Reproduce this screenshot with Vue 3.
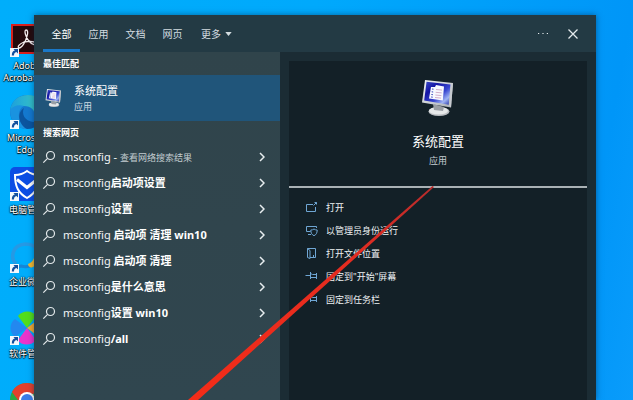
<script setup>
import { ref } from 'vue'

const tabs = ['全部', '应用', '文档', '网页']
const activeTab = ref('全部')

const results = [
  { query: 'msconfig', hint: '查看网络搜索结果' },
  { query: 'msconfig', rest: '启动项设置' },
  { query: 'msconfig', rest: '设置' },
  { query: 'msconfig', rest: ' 启动项 清理 win10' },
  { query: 'msconfig', rest: ' 启动项 清理' },
  { query: 'msconfig', rest: '是什么意思' },
  { query: 'msconfig', rest: '设置 win10' },
  { query: 'msconfig', rest: '/all' },
]

const actions = [
  { icon: 'open', label: '打开' },
  { icon: 'admin', label: '以管理员身份运行' },
  { icon: 'folder', label: '打开文件位置' },
  { icon: 'pin', label: '固定到"开始"屏幕' },
  { icon: 'pin', label: '固定到任务栏' },
]

const shortcuts = [
  { id: 'acrobat', lines: ['Adobe', 'Acrobat DC'] },
  { id: 'edge', lines: ['Microsoft', 'Edge'] },
  { id: 'guard', lines: ['电脑管家'] },
  { id: 'wecom', lines: ['企业微信'] },
  { id: 'soft', lines: ['软件管理'] },
  { id: 'chrome', lines: [] },
]
</script>

<template>
  <div class="desktop">
    <svg class="defs" aria-hidden="true">
      <defs>
        <linearGradient id="screen" x1="0" y1="0" x2="1" y2="1">
          <stop offset="0" stop-color="#3c4cc8" />
          <stop offset=".3" stop-color="#1414a4" />
          <stop offset=".6" stop-color="#3a48d0" />
          <stop offset=".8" stop-color="#a0b4f4" />
          <stop offset="1" stop-color="#1c2a9c" />
        </linearGradient>
        <linearGradient id="frame" x1="0" y1="0" x2="1" y2="1">
          <stop offset="0" stop-color="#f2f4f6" />
          <stop offset="1" stop-color="#a9aeb4" />
        </linearGradient>
        <linearGradient id="edge-top" x1="0" y1="0" x2="1" y2="0">
          <stop offset="0" stop-color="#1c9fdc" />
          <stop offset="1" stop-color="#3fcfc0" />
        </linearGradient>
        <symbol id="monitor" viewBox="0 0 34 38">
          <ellipse cx="18" cy="32.500" rx="10.500" ry="4.500" fill="#b9bcc0" />
          <ellipse cx="17.500" cy="31.800" rx="9.500" ry="3.800" fill="#e6e8e9" />
          <path d="M12 25l11 3-1 4-9-1z" fill="#9a9ea4" />
          <path d="M4 1l28 3-2 24.500L1 23.500z" fill="url(#frame)" />
          <path d="M5.500 2.800l24 2.600-1.800 20.400L3.200 21.500z" fill="url(#screen)" />
          <path d="M10 8h4l1-2 8 1.500-1.200 14L8 19.500z" fill="#f8f9ff" />
          <path d="M15 10.500l6 .6M14.700 13.300l6 .6M14.400 16l6 .6M14 18.500l6 .6" stroke="#c99abc" stroke-width=".8" />
          <path d="M11 10l1.500.2M10.700 12.800l1.500.2M10.400 15.500l1.500.2M10.200 18l1.500.2" stroke="#3446b8" />
          <path d="M30 5l2-1-2 24.500-2-2z" fill="#c6cacf" />
        </symbol>
      </defs>
    </svg>

    <div class="shortcuts">
      <a v-for="s in shortcuts" :key="s.id" class="shortcut" href="#">
        <svg class="shortcut-icon" viewBox="0 0 34 34" aria-hidden="true">
          <g v-if="s.id === 'acrobat'">
            <rect x="2" y="2" width="30" height="28" fill="#250a0c" stroke="#d8201c" stroke-width="2" />
            <path d="M16 7c2 0 2 3 1 6-1 5-5 12-8 12-2-1 0-4 5-6 5-1 10-1 12 1 1 3-4 2-7-2-2-2-4-7-4-9 0-1 .3-2 1-2z" fill="none" stroke="#f6eeee" stroke-width="1.300" />
          </g>
          <g v-else-if="s.id === 'edge'">
            <circle cx="17" cy="17" r="17" fill="#1479cf" />
            <path d="M0 15C2 5 9 0 18 0c9 0 16 6 16 14 0 5-4 8-10 8 2-7-3-11-10-11-6 0-11 2-14 4z" fill="url(#edge-top)" />
            <path d="M0 15c3-4 9-6 14-4-6 3-7 12-2 18 2 2 4 4 7 5C8 35 0 27 0 15z" fill="#1a93e0" />
            <path d="M14 13c-3 6 1 13 9 14 3 0 6-1 8-2-3 6-8 9-14 9-8-4-11-16-3-21z" fill="#0b559f" />
          </g>
          <g v-else-if="s.id === 'guard'">
            <rect width="34" height="34" rx="5" fill="#0c4ee4" />
            <path d="M17 4c4 3 8 4 12 4 0 11-3 18-12 23C8 26 5 19 5 8c4 0 8-1 12-4z" fill="none" stroke="#fff" stroke-width="2" />
            <path d="M7 12.500l10 8 10-8" fill="none" stroke="#fff" stroke-width="3" />
          </g>
          <g v-else-if="s.id === 'wecom'">
            <path d="M6 25C0 19 2 6 15 5c13 0 17 10 12 16" fill="none" stroke="#2699e4" stroke-width="3.500" />
            <path d="M6 25l-1 4 6-2c3 1 6 1 9 0" fill="none" stroke="#1785d6" stroke-width="3" />
            <path d="M18 25c3-1 5-3 6-6 2 3 3 7-1 9-2 1-5 0-5-3z" fill="#f5b92d" />
          </g>
          <g v-else-if="s.id === 'soft'">
            <path d="M17 17L8 5c4-6 15-6 18 0z" fill="#53dd1c" />
            <path d="M17 17L29 8c6 4 6 14 0 18z" fill="#f6a92c" />
            <path d="M17 17l9 12c-4 6-15 6-18 0z" fill="#ea35cc" />
            <path d="M17 17L5 26C-1 22-1 12 5 8z" fill="#2388ef" />
          </g>
          <g v-else>
            <circle cx="17" cy="17" r="17" fill="#28a745" />
            <path d="M2 9C8-3 26-3 32 9l-15 3-6 9z" fill="#e4402d" />
            <path d="M32 9c5 13-4 25-15 25l8-17z" fill="#fbc516" />
            <circle cx="17" cy="17" r="8" fill="#fff" />
            <circle cx="17" cy="17" r="6" fill="#3b7de8" />
          </g>
          <g v-if="s.id !== 'chrome'">
            <rect x="0" y="25" width="9" height="9" fill="#f4f8fc" />
            <path d="M1.800 32.500c0-3 1-4.500 3-5L3.500 26H8v4.500L6.500 29c-2 .5-2.500 1.500-2.500 3.500z" fill="#14509e" />
          </g>
        </svg>
        <span v-for="line in s.lines" :key="line" class="shortcut-label">{{ line }}</span>
      </a>
    </div>

    <main class="search">
      <header class="bar">
        <nav class="tabs">
          <button
            v-for="t in tabs"
            :key="t"
            class="tab"
            :class="{ active: t === activeTab }"
            @click="activeTab = t"
          >{{ t }}</button>
          <button class="tab more">
            更多
            <svg class="caret" viewBox="0 0 8 5" aria-hidden="true"><path d="M0 0h8L4 5z" fill="currentColor" /></svg>
          </button>
        </nav>
        <button class="tool" aria-label="选项">
          <svg class="tool-icon" viewBox="0 0 12 12" aria-hidden="true">
            <path d="M1 5.500h1.200M5.400 5.500h1.200M9.800 5.500H11" stroke="currentColor" stroke-width="1.200" />
          </svg>
        </button>
        <button class="tool" aria-label="关闭">
          <svg class="tool-icon" viewBox="0 0 12 12" aria-hidden="true">
            <path d="M1.500 1.500l9 9M10.500 1.500l-9 9" stroke="currentColor" stroke-width="1.300" />
          </svg>
        </button>
      </header>

      <div class="body">
        <section class="results">
          <h2 class="group">最佳匹配</h2>
          <button class="best">
            <svg class="best-icon" viewBox="0 0 34 38" aria-hidden="true"><use href="#monitor" /></svg>
            <span class="best-text">
              <span class="best-name">系统配置</span>
              <span class="best-kind">应用</span>
            </span>
          </button>
          <h2 class="group">搜索网页</h2>
          <ul class="list">
            <li v-for="(r, i) in results" :key="i">
              <button class="row">
                <svg class="lens" viewBox="0 0 14 14" aria-hidden="true">
                  <circle cx="8.500" cy="5.500" r="4" />
                  <path d="M5.600 8.400L1.300 12.700" />
                </svg>
                <span class="query">{{ r.query }}<b v-if="r.rest">{{ r.rest }}</b><template v-if="r.hint"> - <span class="hint">{{ r.hint }}</span></template></span>
                <svg class="chevron" viewBox="0 0 6 10" aria-hidden="true"><path d="M1 1l4 4-4 4" /></svg>
              </button>
            </li>
          </ul>
        </section>

        <section class="detail">
          <div class="card">
            <div class="hero">
              <svg class="hero-icon" viewBox="0 0 34 38" aria-hidden="true"><use href="#monitor" /></svg>
              <h1 class="hero-name">系统配置</h1>
              <p class="hero-kind">应用</p>
            </div>
            <ul class="actions">
              <li v-for="a in actions" :key="a.label">
                <button class="action">
                  <svg class="action-icon" viewBox="0 0 13 13" aria-hidden="true">
                    <path v-if="a.icon === 'open'" d="M8 3.500H1.500v7h9V6M8.500 4.500l3-3M9.500 1.500h2v2" />
                    <path v-else-if="a.icon === 'admin'" d="M5.500 7.500h-4v-5h10v1.500M3 10.500h3M9 5c1 .8 2 1 3.200 1 0 3-1 4.700-3.200 5.700C6.800 10.700 5.800 9 5.800 6c1.200 0 2.200-.2 3.200-1z" />
                    <path v-else-if="a.icon === 'folder'" d="M2.500 1.500v9l2.500 1V3.500L2.500 1.500h8v9H5M8.500 8v2.500" />
                    <path v-else d="M.5 5.500H5M5.500 2v7M5.500 3.500l2 1h4M5.500 7.500h6M11.500 3v6" />
                  </svg>
                  <span>{{ a.label }}</span>
                </button>
              </li>
            </ul>
          </div>
        </section>
      </div>
    </main>

    <svg class="pointer" viewBox="0 0 248 214" aria-hidden="true">
      <defs>
        <linearGradient id="ink" x1="1" y1="0" x2="0" y2="1">
          <stop offset="0" stop-color="#b92c2c" />
          <stop offset=".35" stop-color="#e52c20" />
          <stop offset="1" stop-color="#f42c18" />
        </linearGradient>
      </defs>
      <path d="M246.500 0l1.500 1L12 214H2z" fill="url(#ink)" />
    </svg>
  </div>
</template>

<style>
html,
body {
  margin: 0;
}
</style>

<style scoped>
.desktop {
  position: relative;
  min-height: 100vh;
  overflow: hidden;
  box-sizing: border-box;
  background: linear-gradient(100deg, #00aefb 0%, #00a9fc 45%, #0096f8 90%, #0a9cfb 100%);
  font-family: "Noto Sans", "Noto Sans CJK SC", sans-serif;
  color: #e9eef0;
}

.defs {
  position: absolute;
  width: 0;
  height: 0;
}

button {
  margin: 0;
  padding: 0;
  border: 0;
  background: none;
  color: inherit;
  font: inherit;
  text-align: left;
}

ul {
  margin: 0;
  padding: 0;
  list-style: none;
}

.shortcuts {
  position: absolute;
  top: 23px;
  left: 0;
  display: grid;
  grid-auto-rows: 72px;
  width: 54px;
}

.shortcut {
  display: flex;
  flex-direction: column;
  align-items: center;
  color: #fff;
  text-decoration: none;
}

.shortcut-icon {
  width: 34px;
  height: 34px;
  margin-bottom: 3px;
}

.shortcut-label {
  font-size: 9px;
  line-height: 12px;
  white-space: nowrap;
  text-shadow: 0 1px 1px #000, 1px 0 1px #000, 0 0 2px #000;
}

.search {
  position: absolute;
  inset: 15px 37px 0 34px;
  display: flex;
  flex-direction: column;
  background: #1b2c34;
  box-shadow: 0 0 6px rgba(0, 30, 60, 0.5);
}

.bar {
  display: flex;
  align-items: stretch;
  height: 37px;
  padding: 0 8px 0 9px;
  background: #233a44;
}

.tabs {
  display: flex;
  flex: 1;
}

.tab {
  width: 37px;
  border-top: 3px solid transparent;
  border-bottom: 3px solid transparent;
  font-size: 10px;
  line-height: 14px;
  text-align: center;
  color: #d3dce0;
}

.tab.active {
  border-bottom-color: #1a78c8;
  color: #fff;
}

.tab.more {
  display: flex;
  align-items: center;
  gap: 4px;
  width: auto;
  padding-left: 10px;
}

.caret {
  width: 7px;
  height: 4px;
}

.tool {
  display: flex;
  align-items: center;
  justify-content: center;
  width: 30px;
  color: #e3e9ec;
}

.tool-icon {
  width: 12px;
  height: 12px;
}

.body {
  display: flex;
  flex: 1;
}

.results {
  flex: 0 0 246px;
  background: linear-gradient(#30444b, #30464f);
}

.group {
  margin: 0;
  padding-left: 9px;
  font-size: 9px;
  font-weight: 700;
  line-height: 23px;
  color: #fff;
}

.best {
  display: flex;
  align-items: center;
  gap: 12px;
  width: 100%;
  height: 46px;
  padding-left: 11px;
  background: #20557a;
}

.best-icon {
  width: 17px;
  height: 22px;
}

.best-text {
  display: flex;
  flex-direction: column;
}

.best-name {
  font-size: 11px;
  line-height: 17px;
  color: #fff;
}

.best-kind {
  font-size: 9px;
  line-height: 15px;
  color: #d0dce4;
}

.row {
  display: flex;
  align-items: center;
  width: 100%;
  height: 26px;
  padding: 0 15px 0 8px;
}

.lens {
  width: 14px;
  height: 14px;
  margin-right: 7px;
  fill: none;
  stroke: #e3e9eb;
  stroke-width: 1.2;
}

.query {
  flex: 1;
  font-size: 11px;
  line-height: 16px;
  white-space: pre;
  color: #f3f6f7;
}

.query b {
  color: #fff;
}

.hint {
  font-size: 9px;
  color: #c3cdd1;
}

.chevron {
  width: 6px;
  height: 10px;
  fill: none;
  stroke: #e8eef0;
  stroke-width: 1.5;
}

.detail {
  display: flex;
  flex: 1;
  padding: 9px 9px 0;
}

.card {
  flex: 1;
  background: #132027;
}

.hero {
  display: flex;
  flex-direction: column;
  align-items: center;
  padding: 18px 0 17px;
  border-bottom: 2px solid #a9b1b5;
}

.hero-icon {
  width: 34px;
  height: 38px;
}

.hero-name {
  margin: 14px 0 0;
  font-size: 13px;
  font-weight: 400;
  line-height: 20px;
  color: #fff;
}

.hero-kind {
  margin: 2px 0 0;
  font-size: 9px;
  line-height: 16px;
  color: #c6cfd3;
}

.actions {
  padding: 8px 16px;
}

.action {
  display: flex;
  align-items: center;
  gap: 8px;
  width: 100%;
  height: 23px;
  font-size: 9px;
  line-height: 14px;
  color: #eef2f4;
}

.action-icon {
  width: 13px;
  height: 13px;
  fill: none;
  stroke: #6fa6d4;
  stroke-width: 1;
}

.pointer {
  position: absolute;
  top: 186px;
  left: 186px;
  width: 248px;
  height: 214px;
  pointer-events: none;
}
</style>
